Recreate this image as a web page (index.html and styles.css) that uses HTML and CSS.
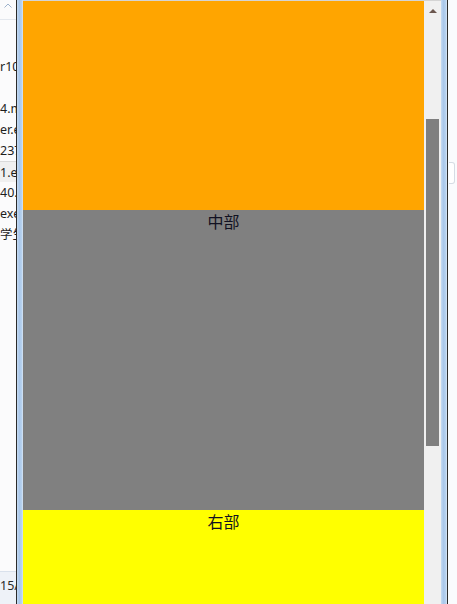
FILE: index.html
```html
<!DOCTYPE html>
<html>
<head>
<meta charset="utf-8">
<link rel="stylesheet" href="styles.css">
</head>
<body>
<div class="screen">
  <div class="behind-left">
    <div class="hdr">
      <svg class="sort" width="8" height="5" viewBox="0 0 8 5"><path d="M0.5 4.5 L4 1 L7.5 4.5" fill="none" stroke="#9fb3cc" stroke-width="1"/></svg>
    </div>
    <div class="rows">
      <div class="row"></div>
      <div class="row"><span class="clip">r10</span></div>
      <div class="row"></div>
      <div class="row"><span class="clip">4.m</span></div>
      <div class="row"><span class="clip">er.e</span></div>
      <div class="row"><span class="clip">237</span></div>
      <div class="row sel"><span class="clip">1.e</span></div>
      <div class="row"><span class="clip">40.1</span></div>
      <div class="row"><span class="clip">exe</span></div>
      <div class="row"><span class="clip">学生</span></div>
    </div>
    <div class="status"><span class="clip">15/</span></div>
  </div>
  <div class="edge-dark"></div>
  <div class="frame"></div>
  <div class="viewport">
    <div class="block orange"></div>
    <div class="block gray">中部</div>
    <div class="block yellow">右部</div>
  </div>
  <div class="scrollbar">
    <div class="arrow-up"></div>
    <div class="thumb"></div>
  </div>
  <div class="frame"></div>
  <div class="edge-dark"></div>
  <div class="behind-right">
    <div class="tab"></div>
  </div>
</div>
</body>
</html>
```

FILE: styles.css
```css
html, body {
  margin: 0;
  padding: 0;
  background: #ffffff;
}
.screen {
  display: flex;
  width: 457px;
  height: 604px;
  overflow: hidden;
  font-family: "Noto Sans", "Noto Sans CJK SC", sans-serif;
}
.behind-left {
  width: 16px;
  flex: none;
  background: #fbfbfc;
  display: flex;
  flex-direction: column;
  overflow: hidden;
}
.hdr {
  height: 20px;
  flex: none;
  border-bottom: 1px solid #e4e8ee;
  display: flex;
  align-items: flex-start;
  padding-left: 4px;
  padding-top: 3px;
  box-sizing: border-box;
}
.sort {
  display: block;
}
.rows {
  flex: 1;
  padding-top: 15px;
}
.row {
  height: 21px;
  line-height: 21px;
  font-size: 12.5px;
  color: #1e1e1e;
  white-space: nowrap;
  overflow: hidden;
}
.row.sel {
  background: #f0f0f0;
  border-top: 1px solid #dadada;
  height: 20px;
}
.clip {
  display: block;
  white-space: nowrap;
}
.status {
  height: 26px;
  flex: none;
  background: #eef2f8;
  border-top: 1px solid #d9e1ec;
  font-size: 12.5px;
  line-height: 16px;
  color: #2a2a2a;
  padding-top: 6px;
}
.edge-dark {
  width: 1px;
  flex: none;
  background: #2b2b2b;
}
.frame {
  width: 6px;
  flex: none;
  background: linear-gradient(to right, #c6dbf2, #a9c7ea 40%, #b8d3f0 80%, #dbe8f6);
}
.viewport {
  width: 401px;
  flex: none;
  display: flex;
  flex-direction: column;
  border-top: 1px solid #d4d4d4;
  overflow: hidden;
}
.block {
  flex: none;
  text-align: center;
  font-size: 16px;
  line-height: 24px;
  color: #111122;
}
.orange {
  height: 209px;
  background: #ffa500;
}
.gray {
  height: 300px;
  background: #808080;
}
.yellow {
  height: 200px;
  background: #ffff00;
}
.scrollbar {
  width: 17px;
  flex: none;
  background: #f0f0f0;
  border-top: 1px solid #d4d4d4;
  display: flex;
  flex-direction: column;
  align-items: center;
}
.arrow-up {
  margin-top: 8px;
  width: 0;
  height: 0;
  border-left: 4px solid transparent;
  border-right: 4px solid transparent;
  border-bottom: 4px solid #6b574f;
}
.thumb {
  margin-top: 106px;
  width: 13px;
  height: 327px;
  background: #7f7f7f;
}
.behind-right {
  flex: 1;
  background: #fafbfd;
  position: relative;
}
.tab {
  position: absolute;
  left: 1px;
  top: 162px;
  width: 5px;
  height: 20px;
  border: 1px solid #d6dce4;
  border-left: none;
  border-radius: 0 3px 3px 0;
  background: #ffffff;
}
```
